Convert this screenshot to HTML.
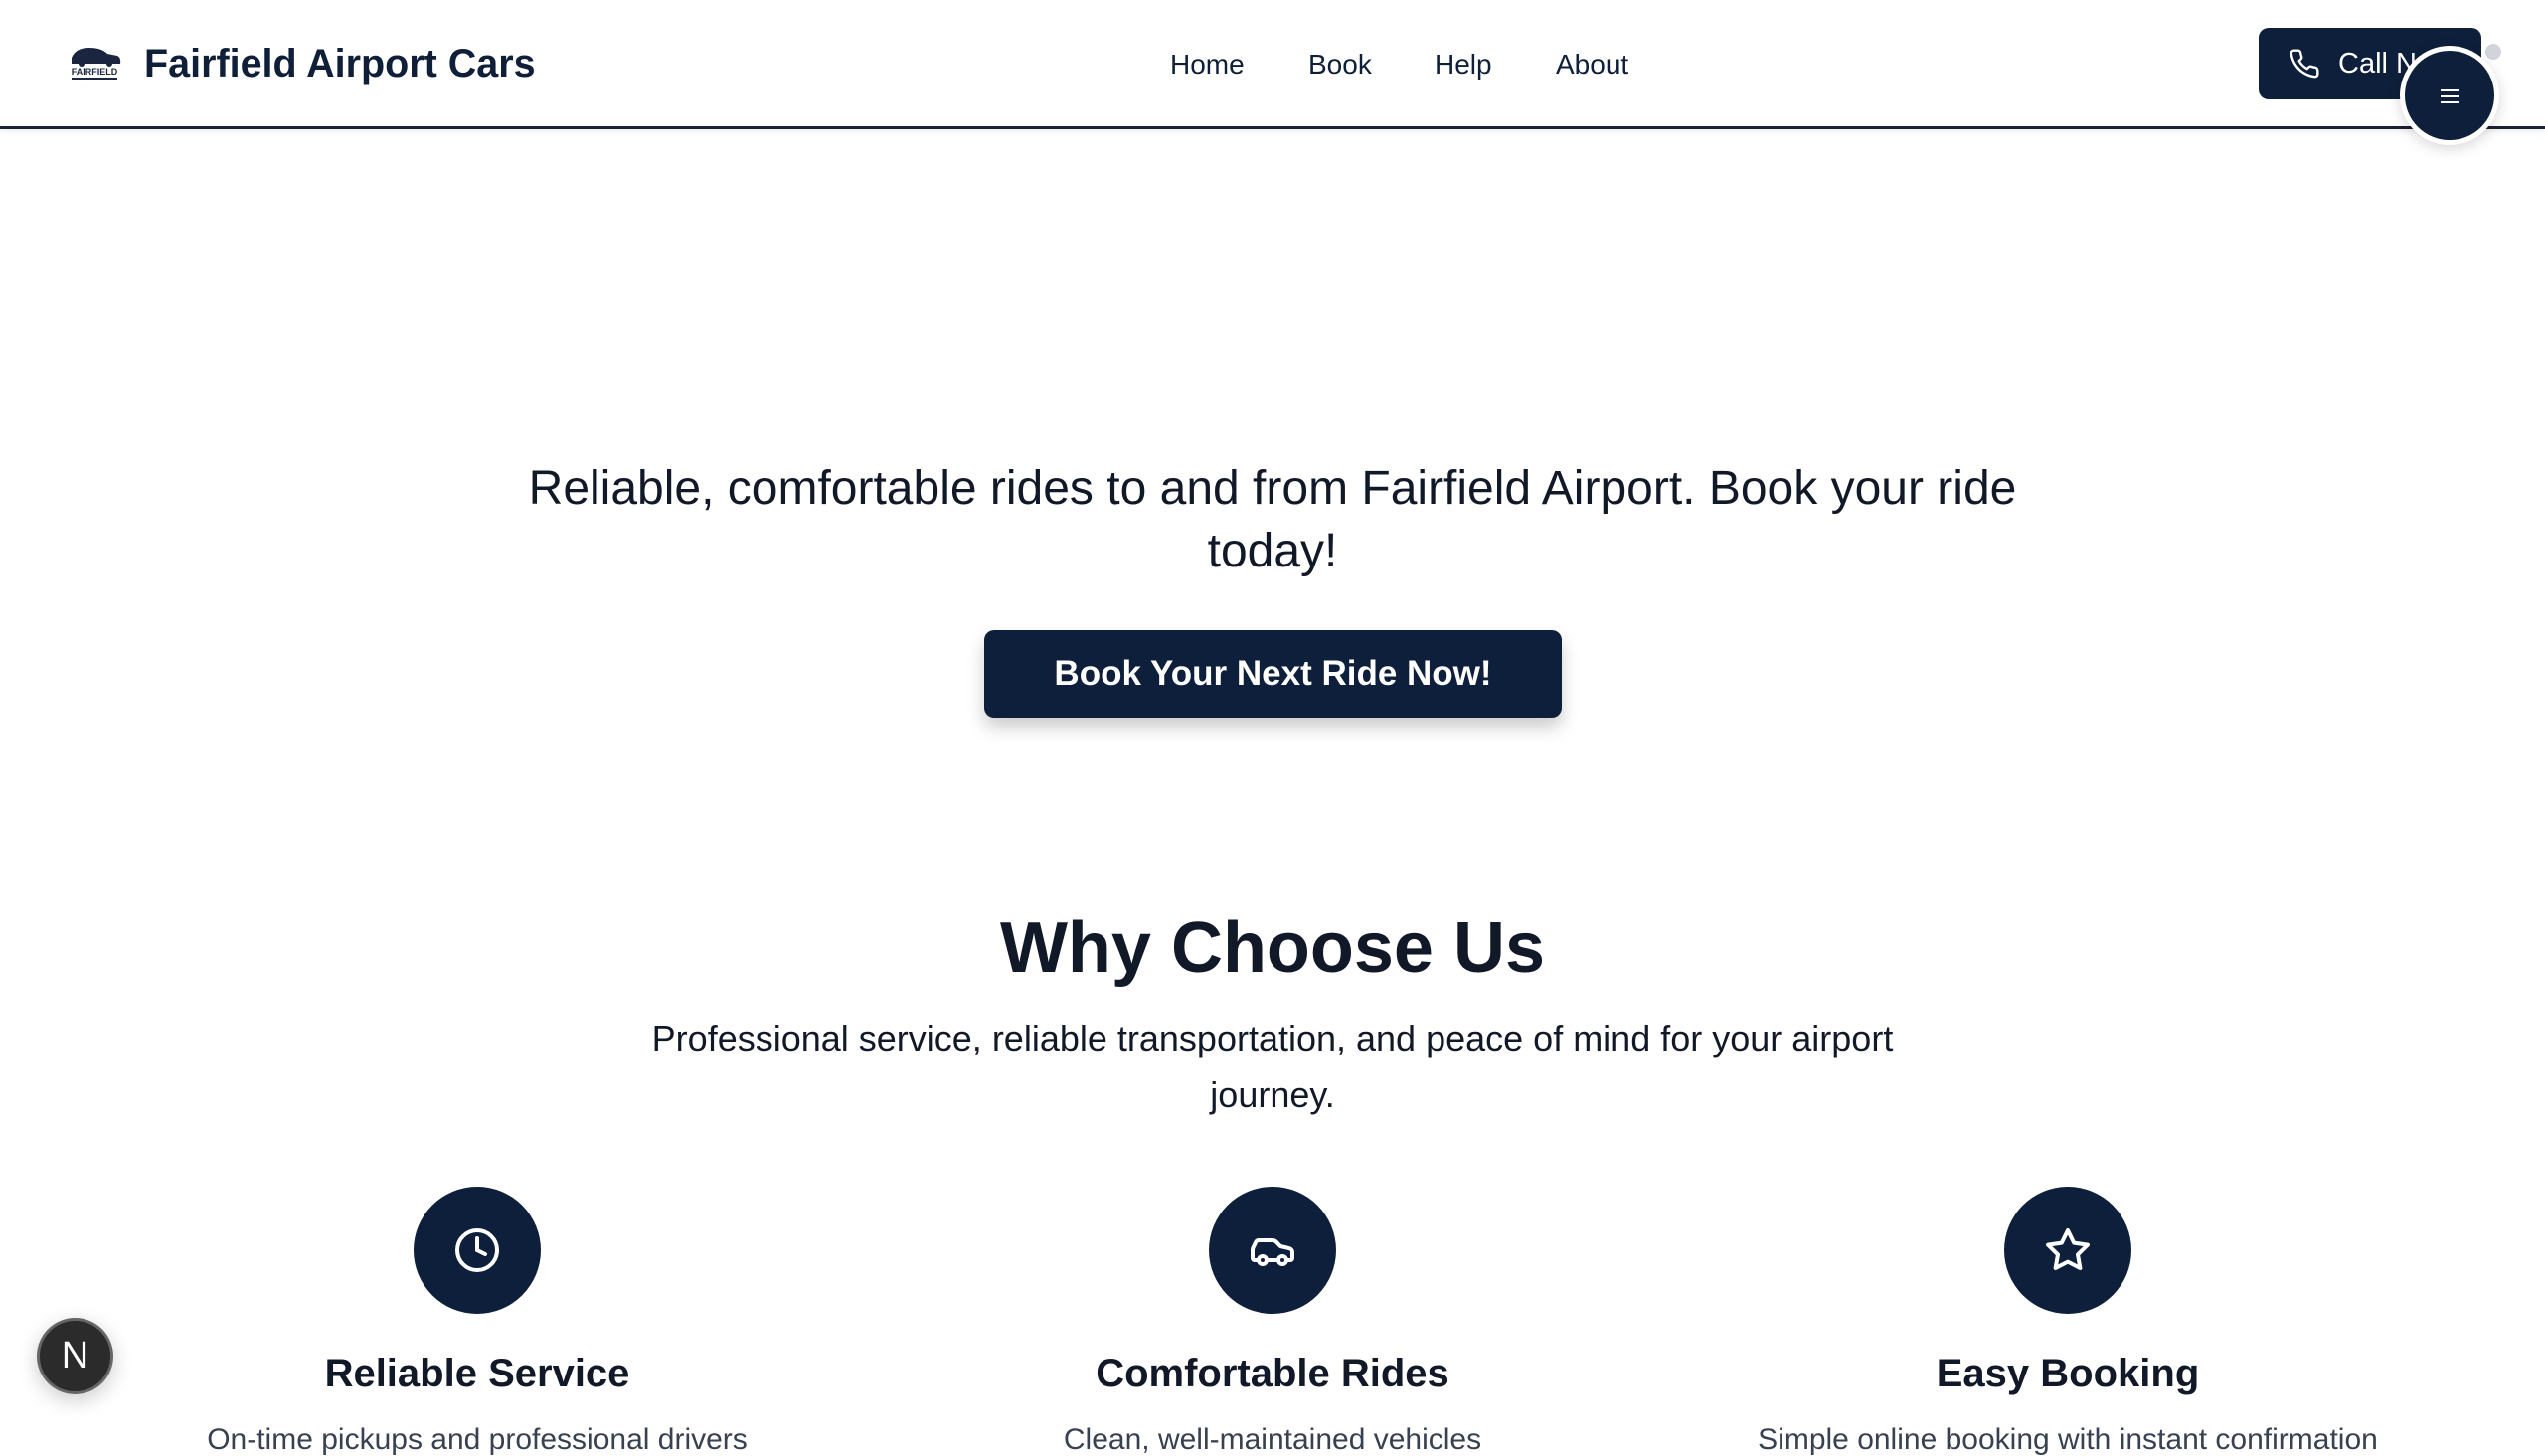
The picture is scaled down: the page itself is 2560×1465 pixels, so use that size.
<!DOCTYPE html>
<html><head><meta charset="utf-8"><style>
*{margin:0;padding:0;box-sizing:border-box}
html,body{width:2560px;height:1440px;overflow:hidden;background:#fff;font-family:"Liberation Sans",Arial,sans-serif;color:#111827}
.hdr{position:absolute;left:0;top:0;width:2560px;height:130px;border-bottom:3px solid #1a2233;box-shadow:0 2px 6px rgba(0,0,0,.08)}
.title{position:absolute;left:145px;top:42px;font-size:39.5px;font-weight:bold;color:#0f1f3a}
.nav a{position:absolute;top:49px;font-size:28px;color:#0f1f3a;text-decoration:none}
.call{position:absolute;left:2272px;top:28px;width:224px;height:72px;background:#0e1f3b;border-radius:10px;color:#fff;font-size:29px}
.menu{position:absolute;left:2414px;top:46px;width:100px;height:100px;border-radius:50%;background:#0e1f3b;border:5px solid #fff;box-shadow:0 4px 14px rgba(0,0,0,.15)}
.dot{position:absolute;left:2500px;top:44px;width:16px;height:16px;border-radius:50%;background:#d1d5db}
.hero{position:absolute;left:480px;width:1600px;top:460px;text-align:center;font-size:48px;line-height:63px;color:#111827}
.btn{position:absolute;left:990px;top:634px;width:581px;height:88px;background:#0e1f3b;border-radius:10px;color:#fff;font-size:35px;font-weight:bold;text-align:center;line-height:88px;box-shadow:0 10px 18px rgba(0,0,0,.2)}
h2{position:absolute;left:0;width:2560px;top:913px;text-align:center;font-size:72px;font-weight:bold;color:#111827}
.sub{position:absolute;left:640px;width:1280px;top:1016px;text-align:center;font-size:36px;line-height:57px;color:#111827}
.ic{position:absolute;top:1194px;width:128px;height:128px;border-radius:50%;background:#0e1f3b}
.ic svg{position:absolute;left:40px;top:40px}
.ft{position:absolute;top:1360px;width:800px;text-align:center;font-size:40px;font-weight:bold;color:#111827}
.fd{position:absolute;top:1434px;width:800px;text-align:center;font-size:30px;line-height:30px;color:#374151}
.n{position:absolute;left:37px;top:1326px;width:77px;height:77px;border-radius:50%;background:#2b2b2b;border:3px solid #666;color:#fff;font-size:38px;text-align:center;line-height:71px;box-shadow:0 6px 20px rgba(0,0,0,.2)}
</style></head><body>
<div class="hdr">
<svg style="position:absolute;left:66px;top:44px" width="58" height="38" viewBox="0 0 58 38"><path d="M6 14 Q10 4 24 4 Q36 4 42 10 L52 12 Q56 14 55 20 L6 20 Z" fill="#1a2540"/><circle cx="16" cy="20" r="3" fill="#1a2540"/><circle cx="44" cy="20" r="3" fill="#1a2540"/><text x="29" y="31" font-size="9" font-weight="bold" text-anchor="middle" fill="#1a2540" font-family="Liberation Sans">FAIRFIELD</text><rect x="6" y="34" width="46" height="2" fill="#1a2540"/></svg>
<div class="title">Fairfield Airport Cars</div>
<div class="nav"><a style="left:1177px">Home</a><a style="left:1316px">Book</a><a style="left:1443px">Help</a><a style="left:1565px">About</a></div>
<div class="call"><svg style="position:absolute;left:30px;top:20px" width="32" height="32" viewBox="0 0 24 24" fill="none" stroke="#fff" stroke-width="1.8" stroke-linecap="round" stroke-linejoin="round"><path d="M22 16.9v3a2 2 0 0 1-2.2 2 19.8 19.8 0 0 1-8.6-3.1 19.5 19.5 0 0 1-6-6A19.8 19.8 0 0 1 2.1 4.2 2 2 0 0 1 4.1 2h3a2 2 0 0 1 2 1.7c.1 1 .4 1.9.7 2.8a2 2 0 0 1-.5 2.1L8 9.9a16 16 0 0 0 6 6l1.3-1.3a2 2 0 0 1 2.1-.4c.9.3 1.8.6 2.8.7a2 2 0 0 1 1.7 2z"/></svg><span style="position:absolute;left:80px;top:20px">Call Now</span></div>
<div class="dot"></div>
<div class="menu"><svg style="position:absolute;left:36px;top:38px" width="18" height="16" viewBox="0 0 18 16"><rect y="1" width="18" height="2" fill="#fff"/><rect y="7" width="18" height="2" fill="#fff"/><rect y="13" width="18" height="2" fill="#fff"/></svg></div>
</div>
<div class="hero">Reliable, comfortable rides to and from Fairfield Airport. Book your ride today!</div>
<div class="btn">Book Your Next Ride Now!</div>
<h2>Why Choose Us</h2>
<div class="sub">Professional service, reliable transportation, and peace of mind for your airport journey.</div>
<div class="ic" style="left:416px"><svg width="48" height="48" viewBox="0 0 24 24" fill="none" stroke="#fff" stroke-width="2" stroke-linecap="round"><circle cx="12" cy="12" r="10"/><path d="M12 6v6l4 2"/></svg></div>
<div class="ic" style="left:1216px"><svg width="48" height="48" viewBox="0 0 24 24" fill="none" stroke="#fff" stroke-width="2" stroke-linecap="round" stroke-linejoin="round"><path d="M19 17h2c.6 0 1-.4 1-1v-3c0-.9-.7-1.7-1.5-1.9C18.7 10.6 16 10 16 10s-1.3-1.4-2.2-2.3c-.5-.4-1.1-.7-1.8-.7H5c-.6 0-1.1.4-1.4.9l-1.4 2.9A3.7 3.7 0 0 0 2 12v4c0 .6.4 1 1 1h2"/><circle cx="7" cy="17" r="2"/><path d="M9 17h6"/><circle cx="17" cy="17" r="2"/></svg></div>
<div class="ic" style="left:2016px"><svg width="48" height="48" viewBox="0 0 24 24" fill="none" stroke="#fff" stroke-width="2" stroke-linejoin="round"><path d="M12 2l3.1 6.3 6.9 1-5 4.9 1.2 6.8L12 17.8 5.8 21l1.2-6.8-5-4.9 6.9-1z"/></svg></div>
<div class="ft" style="left:80px">Reliable Service</div>
<div class="ft" style="left:880px">Comfortable Rides</div>
<div class="ft" style="left:1680px">Easy Booking</div>
<div class="fd" style="left:80px">On-time pickups and professional drivers</div>
<div class="fd" style="left:880px">Clean, well-maintained vehicles</div>
<div class="fd" style="left:1680px">Simple online booking with instant confirmation</div>
<div class="n">N</div>
</body></html>
